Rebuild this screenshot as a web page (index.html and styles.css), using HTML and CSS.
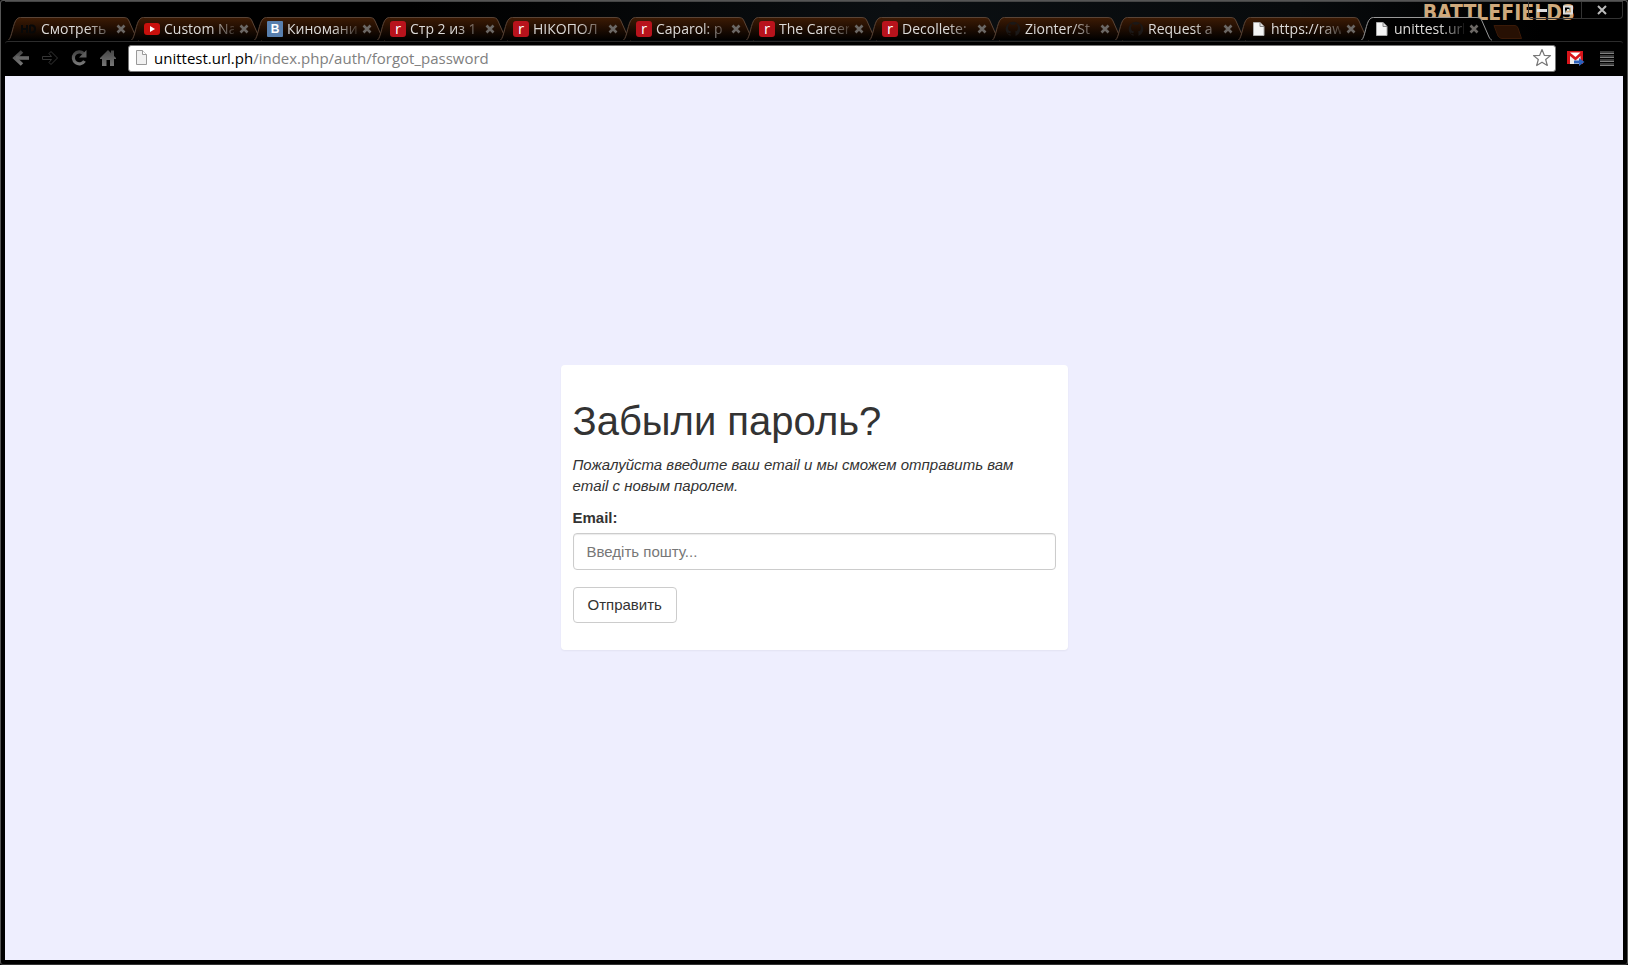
FILE: index.html
```html
<!DOCTYPE html>
<html lang="ru">
<head>
<meta charset="utf-8">
<title>Забыли пароль?</title>
<link rel="stylesheet" href="styles.css">
</head>
<body>
<svg class="defs" aria-hidden="true">
  <defs>
    <linearGradient id="tabfill" x1="0" y1="0" x2="0" y2="1"><stop offset="0" stop-color="#3d1b04"/><stop offset="0.5" stop-color="#1f0d02"/><stop offset="1" stop-color="#000"/></linearGradient>
    <linearGradient id="tool" x1="0" y1="0" x2="0" y2="1"><stop offset="0" stop-color="#444"/><stop offset="1" stop-color="#777"/></linearGradient>
    <symbol id="shape" viewBox="0 0 132 25" preserveAspectRatio="none">
      <path d="M0.500 23C4 21 5 5 9 2C10 0.500 12 0.500 14 0.500H115C118 0.500 120 1 121 4L128 20C129 22 130 23 131 23"/>
    </symbol>
    <symbol id="close" viewBox="0 0 10 10"><path d="M1.500 1.500L8.500 8.500M8.500 1.500L1.500 8.500" stroke="#6b6764" stroke-width="2.600"/></symbol>
    <symbol id="hd" viewBox="0 0 16 16"><path d="M1 4V12M6 4V12M1 8H6M9 4V12M9 4.500H11Q14 4.500 14 8T11 11.500H9" stroke="#080808" stroke-width="2" fill="none"/></symbol>
    <symbol id="video" viewBox="0 0 16 16"><rect y="2" width="16" height="12" rx="3" fill="#c9100c"/><path d="M6 5L11 8L6 11Z" fill="#fff"/></symbol>
    <symbol id="git" viewBox="0 0 16 16"><path d="M5.500 15A7.300 7.300 0 1 1 10.500 15V12Q10.500 11 10 10.500Q13 10 13 7Q13 5.500 12.200 4.700V2.600Q11 2.600 9.800 3.700H6.200Q5 2.600 3.800 2.600V4.700Q3 5.500 3 7Q3 10 6 10.500Q5.500 11 5.500 12Q4 12.500 3 11.200L2.500 12.200Q4 13.500 5.500 13.200Z" fill="#1b1817"/></symbol>
    <symbol id="page" viewBox="0 0 16 16"><path d="M2.500 1.500H9L13 5.500V14.500H2.500Z" fill="#f4f4f4" stroke="#aaa"/><path d="M9 1.500V5.500H13" fill="#ddd" stroke="#888"/></symbol>
  </defs>
</svg>
<div class="window">
  <header class="titlebar">
    <nav class="tabs" aria-label="Tabs">
      <div class="tab"><svg class="shape"><use href="#shape"/></svg><svg class="fav"><use href="#hd"/></svg><span class="name">Смотреть</span><button class="close" aria-label="Close"><svg><use href="#close"/></svg></button></div>
      <div class="tab"><svg class="shape"><use href="#shape"/></svg><svg class="fav"><use href="#video"/></svg><span class="name">Custom Na</span><button class="close" aria-label="Close"><svg><use href="#close"/></svg></button></div>
      <div class="tab"><svg class="shape"><use href="#shape"/></svg><span class="fav vk">B</span><span class="name">Киномани</span><button class="close" aria-label="Close"><svg><use href="#close"/></svg></button></div>
      <div class="tab"><svg class="shape"><use href="#shape"/></svg><span class="fav red">r</span><span class="name">Стр 2 из 1</span><button class="close" aria-label="Close"><svg><use href="#close"/></svg></button></div>
      <div class="tab"><svg class="shape"><use href="#shape"/></svg><span class="fav red">r</span><span class="name">НІКОПОЛ</span><button class="close" aria-label="Close"><svg><use href="#close"/></svg></button></div>
      <div class="tab"><svg class="shape"><use href="#shape"/></svg><span class="fav red">r</span><span class="name">Caparol: p</span><button class="close" aria-label="Close"><svg><use href="#close"/></svg></button></div>
      <div class="tab"><svg class="shape"><use href="#shape"/></svg><span class="fav red">r</span><span class="name">The Career</span><button class="close" aria-label="Close"><svg><use href="#close"/></svg></button></div>
      <div class="tab"><svg class="shape"><use href="#shape"/></svg><span class="fav red">r</span><span class="name">Decollete:</span><button class="close" aria-label="Close"><svg><use href="#close"/></svg></button></div>
      <div class="tab"><svg class="shape"><use href="#shape"/></svg><svg class="fav"><use href="#git"/></svg><span class="name">Zionter/St</span><button class="close" aria-label="Close"><svg><use href="#close"/></svg></button></div>
      <div class="tab"><svg class="shape"><use href="#shape"/></svg><svg class="fav"><use href="#git"/></svg><span class="name">Request a</span><button class="close" aria-label="Close"><svg><use href="#close"/></svg></button></div>
      <div class="tab"><svg class="shape"><use href="#shape"/></svg><svg class="fav"><use href="#page"/></svg><span class="name">https://raw</span><button class="close" aria-label="Close"><svg><use href="#close"/></svg></button></div>
      <div class="tab active"><svg class="shape"><use href="#shape"/></svg><svg class="fav"><use href="#page"/></svg><span class="name">unittest.url</span><button class="close" aria-label="Close"><svg><use href="#close"/></svg></button></div>
      <button class="newtab" aria-label="New tab"><svg viewBox="0 0 30 14"><path d="M1 0.500H22Q24 0.500 25 3L28.500 13.500H9Q6.500 13.500 5 11Z" fill="#271003" stroke="#3a1a08"/></svg></button>
    </nav>
    <span class="brand">BATTLEFIELD3</span>
    <div class="controls">
      <button aria-label="Minimize"><svg width="12" height="10"><path d="M1 5.500H11" stroke="#ddd" stroke-width="3"/></svg></button>
      <button aria-label="Restore"><svg width="12" height="10"><path d="M2 1.500H10V8.500H2Z M5 5H7" stroke="#ddd" stroke-width="2" fill="none"/></svg></button>
      <button aria-label="Close window"><svg width="10" height="10"><path d="M1 1L9 9M9 1L1 9" stroke="#bbb" stroke-width="2"/></svg></button>
    </div>
  </header>
  <div class="toolbar">
    <button aria-label="Back"><svg width="18" height="18"><path d="M10 2.500L3 9L10 15.500" fill="none" stroke="url(#tool)" stroke-width="3.600"/><path d="M4 9H17" stroke="#666" stroke-width="3.600"/></svg></button>
    <button aria-label="Forward"><svg width="18" height="18"><path d="M1.500 7.500H10.500L8 4.500L10 2.500L16.500 9L10 15.500L8 13.500L10.500 10.500H1.500Z" fill="none" stroke="#353535"/></svg></button>
    <button aria-label="Reload"><svg width="18" height="18"><path d="M13.500 4.500A6 6 0 1 0 14.500 12" fill="none" stroke="url(#tool)" stroke-width="3.200"/><path d="M16.500 1V8.500H9Z" fill="#5d5d5d"/></svg></button>
    <button aria-label="Home"><svg width="18" height="18"><path d="M9 1L12 4V1.500H15V7L17 9V10H15V17H11V11H7.500V17H3V10H1V9Z" fill="url(#tool)"/></svg></button>
    <div class="address">
      <svg width="18" height="18"><path d="M4.500 1.500H10.500L14.500 5.500V15.500H4.500Z" fill="#f1f1f1" stroke="#999"/><path d="M10.500 1.500V5.500H14.500" fill="#fff" stroke="#999"/></svg>
      <a class="url" href="#"><b>unittest.url.ph</b>/index.php/auth/forgot_password</a>
      <button class="star" aria-label="Bookmark"><svg width="20" height="20" viewBox="0 0 20 20"><path d="M10 1.500L12.300 7.300L18.500 7.600L13.700 11.500L15.300 17.500L10 14.200L4.700 17.500L6.300 11.500L1.500 7.600L7.700 7.300Z" fill="#fff" stroke="#777" stroke-width="1.200" stroke-linejoin="round"/></svg></button>
    </div>
    <button class="mail" aria-label="Mail"><svg width="18" height="18"><path d="M0 2H16V15H0Z" fill="#d8141a"/><path d="M3 3.500L8.500 8L13.500 3.500Z" fill="#fff"/><path d="M3 15V7L8.500 11.500L13.500 7V15Z" fill="#eee"/><path d="M7 11.500H12V9L17.500 13L12 17V14.500H7Z" fill="#2c62bd"/></svg></button>
    <button class="menu" aria-label="Menu"><svg width="16" height="18"><path d="M1 2h14v3H1zM1 6h14v3H1zM1 10h14v3H1zM1 14h14v3H1z" fill="#3c3c3c"/><path d="M1 4h14v1H1zM1 8h14v1H1zM1 12h14v1H1zM1 16h14v1H1z" fill="#808080"/></svg></button>
  </div>
  <main class="viewport">
    <form class="card">
      <h1>Забыли пароль?</h1>
      <p class="hint">Пожалуйста введите ваш email и мы сможем отправить вам email с новым паролем.</p>
      <label for="email">Email:</label>
      <input id="email" type="email" placeholder="Введіть пошту...">
      <button class="submit" type="button">Отправить</button>
    </form>
  </main>
</div>
</body>
</html>
```
FILE: styles.css
```css
* { box-sizing: border-box; }
body { margin: 0; background: #000; }
button { margin: 0; padding: 0; border: 0; background: none; display: block; }
svg { display: block; }
.defs { position: absolute; width: 0; height: 0; }
.window {
  min-height: 100vh;
  display: flex;
  flex-direction: column;
  background: #000;
  border: 1px solid #555;
  border-bottom-color: #333;
  border-radius: 3px;
  padding: 0 4px 4px;
  font-family: "Open Sans", "Noto Sans", sans-serif;
}
.titlebar {
  position: relative;
  height: 40px;
  padding-top: 15px;
  background: linear-gradient(90deg, #000 25%, #0b0f12 55%, #080b0d 80%, #000 95%);
  border-top: 1px solid #444;
}
.tabs { display: flex; padding-left: 3px; position: relative; z-index: 1; }
.tab {
  position: relative;
  width: 123px;
  height: 24px;
  flex: none;
  display: flex;
  align-items: center;
  padding-left: 13px;
}
.shape { position: absolute; left: 0; top: 0; width: 132px; height: 25px; fill: url(#tabfill); stroke: #5a4436; }
.active .shape { fill: #000; stroke: #999; }
.fav { position: relative; width: 16px; height: 16px; flex: none; color: #fff; text-align: center; }
.vk { background: #587fae; border-radius: 1px; font: bold 12px/16px "Liberation Sans", sans-serif; }
.red { background: #b8131c; border-radius: 3px; font: 15px/14px "Open Sans", sans-serif; }
.name {
  position: relative;
  width: 70px;
  margin-left: 4px;
  overflow: hidden;
  white-space: nowrap;
  font-size: 14px;
  line-height: 22px;
  color: #dcdad8;
  mask-image: linear-gradient(90deg, #000 65%, rgba(0, 0, 0, 0.2));
}
.close { position: relative; margin-left: 5px; }
.close svg { width: 10px; height: 10px; }
.newtab { margin: 5px 0 0 9px; }
.newtab svg { width: 30px; height: 14px; }
.brand {
  position: absolute;
  right: 48px;
  top: -3px;
  font: bold 21px/28px "Liberation Sans Narrow", "DejaVu Sans Condensed", sans-serif;
  color: #cfa97c;
}
.controls {
  position: absolute;
  right: 0;
  top: 0;
  z-index: 2;
  display: flex;
  height: 17px;
  border: 1px solid #333;
  border-top: 0;
  border-radius: 0 0 4px 4px;
}
.controls button { width: 26px; display: grid; place-items: center; }
.controls button:last-child { width: 41px; border-left: 1px solid #333; }
.toolbar {
  display: flex;
  align-items: center;
  gap: 11px;
  height: 35px;
  padding: 0 8px 2px 7px;
  border-top: 1px solid #2c2c2c;
  border-radius: 3px 3px 0 0;
}
.address {
  flex: 1;
  display: flex;
  align-items: center;
  height: 27px;
  padding: 0 3px;
  background: #fff;
  border: 1px solid #777;
  border-radius: 3px;
}
.url { margin-left: 4px; flex: 1; font-size: 15px; line-height: 22px; color: #808080; text-decoration: none; }
.url b { font-weight: 400; color: #000; }
.mail { margin-right: 3px; }
.viewport {
  flex: 1;
  display: flex;
  align-items: center;
  justify-content: center;
  background: #eeeefe;
  padding-bottom: 22px;
  font-family: "Liberation Sans", Arial, sans-serif;
  font-size: 15px;
  line-height: 21px;
  color: #333;
}
.card {
  width: 507px;
  padding: 33px 12px 27px;
  background: #fff;
  border-radius: 4px;
  box-shadow: 0 1px 2px rgba(0, 0, 0, 0.05);
}
.card h1 { margin: 0 0 10px; font-size: 40px; line-height: 46px; font-weight: 400; }
.hint { margin: 0 0 11px; padding-right: 12px; font-style: italic; }
.card label { display: block; margin-bottom: 5px; font-weight: 700; }
.card input {
  display: block;
  width: 100%;
  height: 37px;
  padding: 6px 13px;
  font: inherit;
  border: 1px solid #ccc;
  border-radius: 4px;
  box-shadow: inset 0 1px 1px rgba(0, 0, 0, 0.08);
}
.card input::placeholder { color: #777; opacity: 1; }
.submit {
  margin-top: 17px;
  height: 36px;
  padding: 0 14px;
  font: inherit;
  color: #333;
  background: #fff;
  border: 1px solid #ccc;
  border-radius: 4px;
}
```
